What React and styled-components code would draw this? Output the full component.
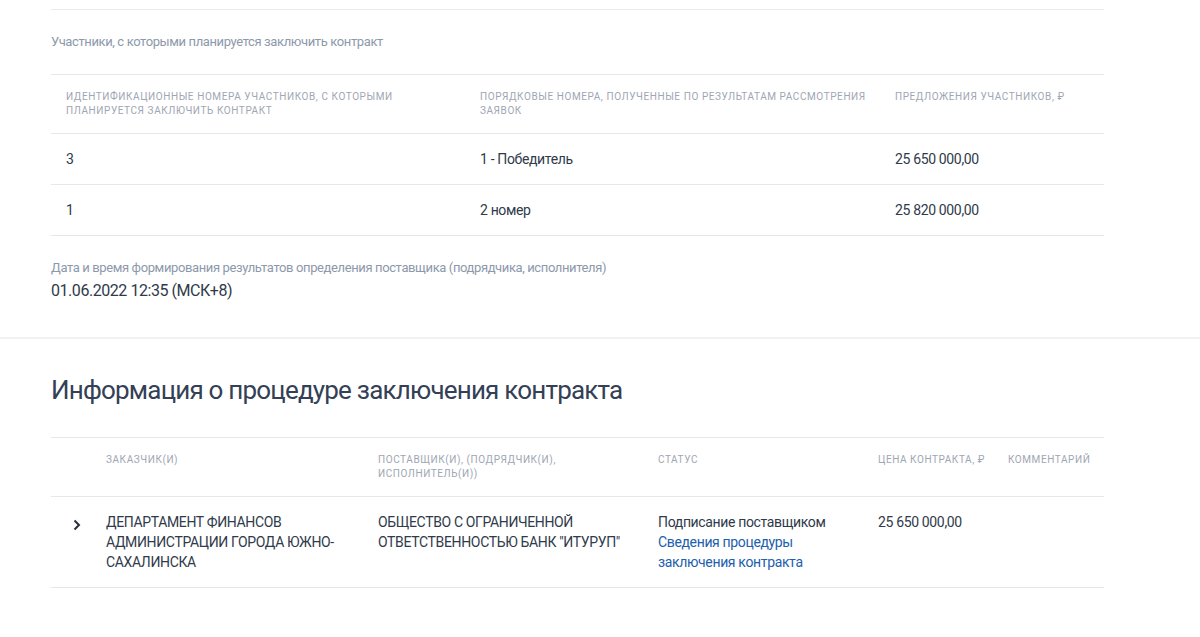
import React from 'react'
import styled, { createGlobalStyle } from 'styled-components'

const GlobalStyle = createGlobalStyle`
  body {
    margin: 0;
    background: #fff;
    font-family: Roboto, "Noto Sans", "Liberation Sans", sans-serif;
    color: #2f3a4a;
  }
`

const Section = styled.section`
  padding: 0 96px 0 51px;
  border-bottom: ${p => (p.$divided ? '2px solid #eff1f3' : 'none')};
  padding-bottom: ${p => p.$bottom || 0}px;
  padding-top: ${p => p.$top || 0}px;
`

const Rule = styled.div`
  height: 1px;
  margin-top: 9px;
  background: #e7eaee;
`

const Caption = styled.div`
  font-size: 13px;
  line-height: 16px;
  letter-spacing: -0.38px;
  color: #8d99ab;
  margin-top: ${p => p.$top || 0}px;
`

const Value = styled.div`
  font-size: 16px;
  line-height: 24px;
  letter-spacing: -0.45px;
  margin-top: 3px;
  color: #2f3a4a;
`

const Heading = styled.h2`
  margin: 0;
  font-size: 26px;
  line-height: 36px;
  letter-spacing: -0.8px;
  font-weight: 400;
  color: #334055;
`

const Table = styled.div`
  margin-top: ${p => p.$top || 0}px;
  border-bottom: 1px solid #e4e7eb;
`

const Row = styled.div`
  display: grid;
  grid-template-columns: ${p => p.$cols};
  border-top: 1px solid #e4e7eb;
`

const HeadCell = styled.div`
  padding: 15px 6px 15px 15px;
  font-size: 10px;
  line-height: 14px;
  letter-spacing: 0.58px;
  text-transform: uppercase;
  color: #9ea6b3;
  min-height: 28px;
  white-space: ${p => (p.$nowrap ? 'nowrap' : 'normal')};
`

const Cell = styled.div`
  padding: 15px;
  font-size: 14px;
  line-height: 20px;
  letter-spacing: -0.35px;
  color: #2f3a4a;
  text-transform: ${p => (p.$upper ? 'uppercase' : 'none')};
`

const ToggleCell = styled.div`
  padding: 19px 0 0 22px;
`

const LinkText = styled.a`
  display: block;
  color: #2160ad;
  text-decoration: none;
`

const participantCols = '414px 415px 1fr'
const contractCols = '40px 272px 280px 220px 130px 1fr'

const participants = [
  { id: '3', place: '1 - Победитель', offer: '25 650 000,00' },
  { id: '1', place: '2 номер', offer: '25 820 000,00' },
]

const Chevron = () => (
  <svg width="8" height="12" viewBox="0 0 8 12">
    <polyline points="1.5,1.5 6,6 1.5,10.5" fill="none" stroke="#2a2f38" strokeWidth="2" />
  </svg>
)

const App = () => {
  return (
    <>
      <GlobalStyle />
      <Section $divided $bottom={34}>
        <Rule />
        <Caption $top={24}>Участники, с которыми планируется заключить контракт</Caption>
        <Table $top={24}>
          <Row $cols={participantCols}>
            <HeadCell>Идентификационные номера участников, с которыми планируется заключить контракт</HeadCell>
            <HeadCell>Порядковые номера, полученные по результатам рассмотрения заявок</HeadCell>
            <HeadCell>Предложения участников, ₽</HeadCell>
          </Row>
          {participants.map(p => (
            <Row key={p.id} $cols={participantCols}>
              <Cell>{p.id}</Cell>
              <Cell>{p.place}</Cell>
              <Cell>{p.offer}</Cell>
            </Row>
          ))}
        </Table>
        <Caption $top={24}>Дата и время формирования результатов определения поставщика (подрядчика, исполнителя)</Caption>
        <Value>01.06.2022 12:35 (МСК+8)</Value>
      </Section>

      <Section $top={33} $bottom={40}>
        <Heading>Информация о процедуре заключения контракта</Heading>
        <Table $top={29}>
          <Row $cols={contractCols}>
            <HeadCell />
            <HeadCell>Заказчик(и)</HeadCell>
            <HeadCell>Поставщик(и), (подрядчик(и), исполнитель(и))</HeadCell>
            <HeadCell>Статус</HeadCell>
            <HeadCell $nowrap>Цена контракта, ₽</HeadCell>
            <HeadCell $nowrap>Комментарий</HeadCell>
          </Row>
          <Row $cols={contractCols}>
            <ToggleCell><Chevron /></ToggleCell>
            <Cell $upper>Департамент финансов администрации города Южно-Сахалинска</Cell>
            <Cell $upper>Общество с ограниченной ответственностью банк "Итуруп"</Cell>
            <Cell>
              Подписание поставщиком
              <LinkText href="#">Сведения процедуры заключения контракта</LinkText>
            </Cell>
            <Cell>25 650 000,00</Cell>
            <Cell />
          </Row>
        </Table>
      </Section>
    </>
  )
}

export default App
